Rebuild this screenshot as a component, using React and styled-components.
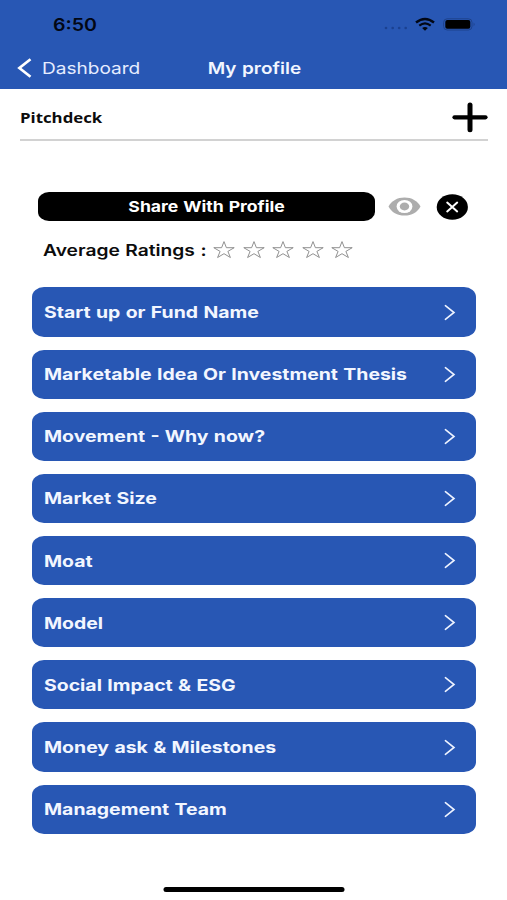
import React from "react";
import styled, { createGlobalStyle } from "styled-components";

const BLUE = "#2857b4";

const GlobalStyle = createGlobalStyle`
  * { box-sizing: border-box; }
  body {
    margin: 0;
    background: #fff;
    font-family: Inter, "Liberation Sans", sans-serif;
  }
`;

const Screen = styled.div`
  width: 507px;
  height: 900px;
  overflow: hidden;
  display: flex;
  flex-direction: column;
  background: #fff;
`;

const Header = styled.header`
  height: 89px;
  flex: none;
  background: ${BLUE};
`;

const StatusBar = styled.div`
  height: 48px;
  padding: 1px 31.5px 0 53px;
  display: flex;
  align-items: center;
  justify-content: space-between;
`;

const StatusIcons = styled.div`
  display: flex;
  align-items: center;
  gap: 7.5px;
`;

/* Wide lettering: glyphs are widened from their left edge or their middle. */
const Text = styled.span`
  display: inline-block;
  white-space: nowrap;
  line-height: 20px;
  word-spacing: 0.6px;
  font-family: ${(p) => p.$family || "inherit"};
  font-size: ${(p) => p.$size || 16}px;
  font-weight: ${(p) => p.$weight || 600};
  color: ${(p) => p.$color || "#0c0c0c"};
  transform: scaleX(${(p) => p.$stretch || 1.2});
  transform-origin: ${(p) => p.$origin || "left"} center;
`;

const NavBar = styled.nav`
  height: 40px;
  padding: 0 15.5px 0 16.5px;
  display: grid;
  grid-template-columns: 1fr auto 1fr;
  align-items: center;
`;

const BackLink = styled.div`
  display: flex;
  align-items: center;
  gap: 9.5px;
`;

const Icon = styled.svg`
  display: block;
  flex: none;
  overflow: visible;
`;

const SignalIcon = styled(Icon)`
  margin-top: 7px;
`;

const TitleRow = styled.div`
  height: 52px;
  margin: 0 19px 0 20px;
  padding-top: 6px;
  border-bottom: 2px solid #d2d2d2;
  display: flex;
  align-items: center;
  justify-content: space-between;
`;

const ShareRow = styled.div`
  margin: 51px 39px 0 37.5px;
  height: 29.5px;
  display: flex;
  align-items: center;
`;

const ShareButton = styled.button`
  width: 338.5px;
  height: 29px;
  padding: 0;
  border: 0;
  border-radius: 11px / 9px;
  background: #000;
  font-family: inherit;
  display: flex;
  align-items: center;
  justify-content: center;
`;

const EyeSlot = styled.div`
  margin: 0 15px 0 13px;
`;

const RatingRow = styled.div`
  height: 24px;
  margin: 16.5px 0 0 43px;
  display: flex;
  align-items: center;
`;

const RatingLabel = styled.div`
  width: 170px;
  display: flex;
`;

const Stars = styled.div`
  display: flex;
  gap: 7.6px;
`;

const List = styled.div`
  margin: 25.4px 31px 0 31.5px;
  display: flex;
  flex-direction: column;
  gap: 12.9px;
`;

const ListItem = styled.div`
  height: 49.25px;
  padding: 0 20.5px 0 12.5px;
  border-radius: 12px / 10px;
  background: ${BLUE};
  display: flex;
  align-items: center;
  justify-content: space-between;
`;

const HomeIndicator = styled.div`
  width: 181px;
  height: 5px;
  margin: auto auto 8px;
  transform: translateX(0.5px);
  border-radius: 3px;
  background: #000;
`;

const SECTIONS = [
  "Start up or Fund Name",
  "Marketable Idea Or Investment Thesis",
  "Movement - Why now?",
  "Market Size",
  "Moat",
  "Model",
  "Social Impact & ESG",
  "Money ask & Milestones",
  "Management Team",
];

const SignalDots = () => (
  <SignalIcon width="24" height="4" viewBox="0 0 24 4" fill="#1b4190">
    <circle cx="2" cy="2" r="1.3" />
    <circle cx="8.7" cy="2" r="1.3" />
    <circle cx="15.2" cy="2" r="1.3" />
    <circle cx="21.7" cy="2" r="1.3" />
  </SignalIcon>
);

const Wifi = () => (
  <Icon width="20" height="13" viewBox="0 0 20 13" fill="none" stroke="#020714">
    <path d="M1 4.6Q10 -2.5 19 4.6" strokeWidth="2.5" />
    <path d="M4.3 7.7Q10 3.2 15.7 7.7" strokeWidth="2.2" />
    <path d="M10 12.8L7.1 10.1Q10 7.9 12.9 10.1Z" fill="#020714" stroke="none" />
  </Icon>
);

const Battery = () => (
  <Icon width="33" height="13" viewBox="0 0 33 13">
    <rect x="0.6" y="0.8" width="28.4" height="11.2" rx="3.6" fill="none" stroke="#1d428c" strokeWidth="1" />
    <rect x="2.3" y="2" width="25" height="8.8" rx="2" fill="#000" />
    <path d="M30.6 4.6Q32.6 6.4 30.6 8.2Z" fill="#1d428c" />
  </Icon>
);

const BackChevron = () => (
  <Icon width="16" height="20" viewBox="0 0 16 20" fill="none" stroke="#fff" strokeWidth="2.7">
    <path d="M13.5 1.3L2.4 10L13.5 18.7" />
  </Icon>
);

const Plus = () => (
  <Icon width="36" height="30" viewBox="0 0 36 30" stroke="#000" strokeLinecap="round">
    <path d="M18 2.9V27.7" strokeWidth="5" />
    <path d="M2.5 15.3H33.5" strokeWidth="4.2" />
  </Icon>
);

const Eye = () => (
  <Icon width="33" height="19" viewBox="0 0 33 19">
    <path d="M0.5 9.5C3.4 3.7 9.4 0.4 16.5 0.4S29.6 3.7 32.5 9.5C29.6 15.3 23.6 18.6 16.5 18.6S3.4 15.3 0.5 9.5Z" fill="#adadad" />
    <ellipse cx="16.5" cy="9.5" rx="7.9" ry="6.6" fill="#fff" />
    <ellipse cx="16.5" cy="9.5" rx="4.7" ry="3.9" fill="#adadad" />
  </Icon>
);

const CloseBadge = () => (
  <Icon width="32" height="26" viewBox="0 0 32 26">
    <ellipse cx="16.3" cy="13" rx="15.6" ry="12.8" fill="#000" />
    <path d="M11.2 8.6L21.2 17.4M21.2 8.6L11.2 17.4" stroke="#fff" strokeWidth="2" strokeLinecap="round" />
  </Icon>
);

const Star = () => (
  <Icon width="22" height="18" viewBox="0 0 22 18" fill="none" stroke="#858585" strokeWidth="0.9">
    <path d="M11 0.6L13.4 6.7H21.2L14.9 10.4L17.4 16.5L11 12.7L4.6 16.5L7.1 10.4L0.8 6.7H8.6Z" />
  </Icon>
);

const RowChevron = () => (
  <Icon width="12" height="17" viewBox="0 0 12 17" fill="none" stroke="#eef3ff" strokeWidth="1.6" strokeLinecap="round">
    <path d="M1.4 1.7L10 8.5L1.4 15.3" />
  </Icon>
);

export default function App() {
  return (
    <Screen>
      <GlobalStyle />
      <Header>
        <StatusBar>
          <Text $size={17} $stretch={1.15} $color="#020714">6:50</Text>
          <StatusIcons>
            <SignalDots />
            <Wifi />
            <Battery />
          </StatusIcons>
        </StatusBar>
        <NavBar>
          <BackLink>
            <BackChevron />
            <Text $size={16.5} $stretch={1.155} $weight={400} $color="#e6edff">Dashboard</Text>
          </BackLink>
          <Text $size={16} $stretch={1.185} $color="#f2f6ff" $origin="center">My profile</Text>
        </NavBar>
      </Header>
      <TitleRow>
        <Text $size={15} $weight={700} $stretch={1.12} $family='"Open Sans", sans-serif'>Pitchdeck</Text>
        <Plus />
      </TitleRow>
      <ShareRow>
        <ShareButton>
          <Text $size={15} $weight={700} $stretch={1.175} $color="#fff" $origin="center">Share With Profile</Text>
        </ShareButton>
        <EyeSlot>
          <Eye />
        </EyeSlot>
        <CloseBadge />
      </ShareRow>
      <RatingRow>
        <RatingLabel>
          <Text>Average Ratings :</Text>
        </RatingLabel>
        <Stars>
          {[1, 2, 3, 4, 5].map((n) => (
            <Star key={n} />
          ))}
        </Stars>
      </RatingRow>
      <List>
        {SECTIONS.map((name) => (
          <ListItem key={name}>
            <Text $weight={700} $stretch={1.215} $color="#f2f6ff">{name}</Text>
            <RowChevron />
          </ListItem>
        ))}
      </List>
      <HomeIndicator />
    </Screen>
  );
}
